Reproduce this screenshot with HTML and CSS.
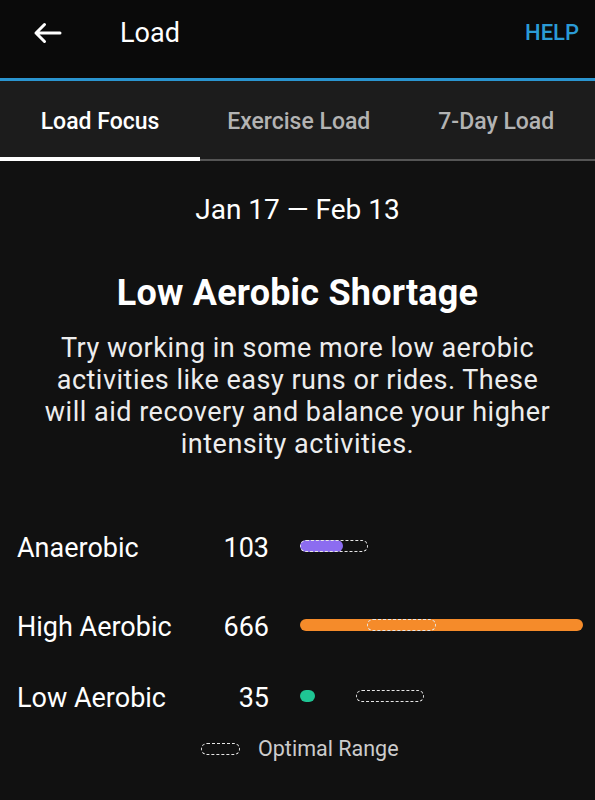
FILE: index.html
```html
<!DOCTYPE html>
<html lang="en">
<head>
    <meta charset="UTF-8">
    <meta name="viewport" content="width=device-width, initial-scale=1.0">
    <title>Load</title>
    <link rel="stylesheet" href="styles.css">
</head>
<body>
    <header class="topbar">
        <div class="back">
            <svg width="30" height="22" viewBox="0 0 30 22">
                <path d="M28 11H4M12.5 2.5L4 11l8.5 8.5" fill="none" stroke="#fff" stroke-width="3" stroke-linecap="round" stroke-linejoin="round"/>
            </svg>
        </div>
        <div class="title">Load</div>
        <div class="help">HELP</div>
    </header>

    <nav class="tabs">
        <div class="tab active">Load Focus</div>
        <div class="tab">Exercise Load</div>
        <div class="tab">7-Day Load</div>
    </nav>

    <main class="content">
        <div class="dates">Jan 17 — Feb 13</div>
        <h2 class="focus-title">Low Aerobic Shortage</h2>
        <p class="focus-text">Try working in some more low aerobic activities like easy runs or rides. These will aid recovery and balance your higher intensity activities.</p>

        <div class="rows">
            <div class="row row-anaerobic">
                <div class="label">Anaerobic</div>
                <div class="value">103</div>
                <div class="track">
                    <div class="fill anaerobic" style="width: 43px"></div>
                    <div class="optimal" style="left: 0; width: 68px"></div>
                </div>
            </div>
            <div class="row row-high">
                <div class="label">High Aerobic</div>
                <div class="value">666</div>
                <div class="track">
                    <div class="fill high" style="width: 283px"></div>
                    <div class="optimal" style="left: 67px; width: 69px"></div>
                </div>
            </div>
            <div class="row row-low">
                <div class="label">Low Aerobic</div>
                <div class="value">35</div>
                <div class="track">
                    <div class="fill low" style="width: 15px"></div>
                    <div class="optimal" style="left: 56px; width: 68px"></div>
                </div>
            </div>
        </div>

        <div class="legend">
            <span class="legend-pill"></span>
            <span class="legend-text">Optimal Range</span>
        </div>
    </main>
</body>
</html>
```

FILE: styles.css
```css
body {
    margin: 0;
    background: #111111;
    font-family: Roboto, 'Noto Sans', sans-serif;
    color: #ffffff;
}

.topbar {
    display: flex;
    align-items: center;
    height: 81px;
    padding-bottom: 13px;
    box-sizing: border-box;
    background: #0a0a0a;
    border-bottom: 3px solid #2a95d0;
}

.back {
    display: flex;
    width: 30px;
    margin-left: 32px;
}

.title {
    flex: 1;
    margin-left: 58px;
    font-size: 27px;
}

.help {
    margin-right: 16px;
    font-size: 22px;
    font-weight: 500;
    color: #2b9bd6;
}

.tabs {
    display: flex;
    height: 80px;
    box-sizing: border-box;
    background: #1c1c1c;
    border-bottom: 2px solid #555555;
}

.tab {
    flex: 1;
    display: flex;
    align-items: center;
    justify-content: center;
    padding-top: 4px;
    margin-bottom: -2px;
    border-bottom: 4px solid transparent;
    font-size: 23px;
    font-weight: 500;
    color: #b3b3b3;
}

.tab:first-child {
    flex: 0 0 200px;
}

.tab.active {
    color: #ffffff;
    border-bottom-color: #ffffff;
}

.content {
    text-align: center;
}

.dates {
    margin-top: 32px;
    font-size: 28px;
}

.focus-title {
    margin: 46px 0 0;
    font-size: 36px;
    font-weight: 700;
    letter-spacing: 0.2px;
}

.focus-text {
    margin: 18px 38px 0;
    font-size: 27px;
    line-height: 32px;
    letter-spacing: 0.5px;
    color: #ededed;
}

.rows {
    margin-top: 68px;
    text-align: left;
}

.row {
    display: flex;
    align-items: center;
    height: 40px;
}

.row-high {
    margin-top: 39px;
}

.row-low {
    margin-top: 31px;
}

.label {
    width: 180px;
    padding-left: 17px;
    font-size: 27px;
}

.value {
    width: 72px;
    text-align: right;
    font-size: 27px;
}

.track {
    position: relative;
    width: 283px;
    height: 12px;
    margin: -4px 0 0 31px;
}

.fill {
    height: 12px;
    border-radius: 6px;
}

.anaerobic { background: #8c6cf0; }
.high { background: #f58b2a; }
.low { background: #1fc594; }

.optimal {
    position: absolute;
    top: 0;
    height: 12px;
    box-sizing: border-box;
    border: 1.5px dashed #e6e6e6;
    border-radius: 6px;
}

.legend {
    display: flex;
    align-items: center;
    margin-top: 18px;
    padding-left: 201px;
}

.legend-pill {
    width: 39px;
    height: 12px;
    box-sizing: border-box;
    border: 1.5px dashed #e6e6e6;
    border-radius: 6px;
}

.legend-text {
    margin-left: 18px;
    font-size: 21.5px;
    color: #cccccc;
}
```
